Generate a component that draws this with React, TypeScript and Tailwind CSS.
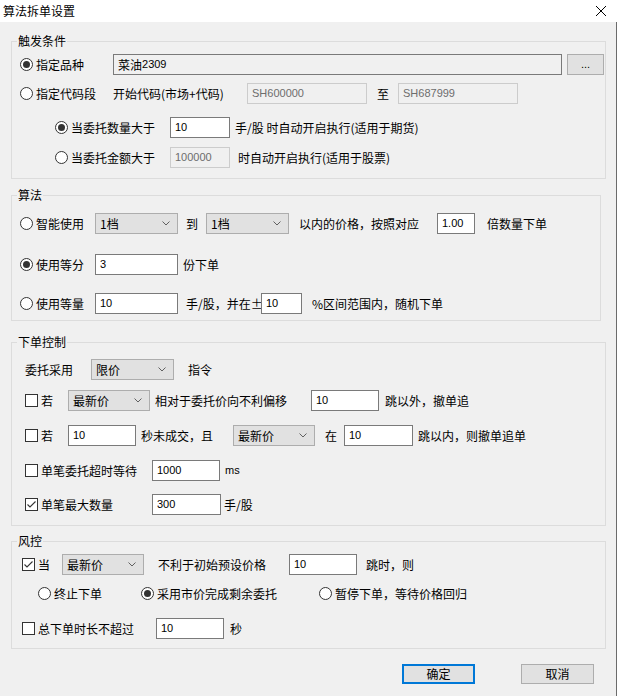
import type { ReactNode } from "react";

const cjk = "font-['Noto_Sans_CJK_SC','Liberation_Sans',sans-serif]";
const num = "font-['Liberation_Sans','Noto_Sans_CJK_SC',sans-serif]";

function Radio({ checked }: { checked?: boolean }) {
  return (
    <span className="w-[13px] h-[13px] shrink-0 rounded-full border border-[#333333] bg-white flex items-center justify-center">
      {checked && <span className="w-[7px] h-[7px] rounded-full bg-[#333333]" />}
    </span>
  );
}

function Check({ checked }: { checked?: boolean }) {
  return (
    <span className="w-[13px] h-[13px] shrink-0 border border-[#333333] bg-white flex items-center justify-center">
      {checked && (
        <svg width="11" height="11" viewBox="0 0 11 11">
          <polyline points="1.5,5.5 4,8 9.5,2.5" fill="none" stroke="#333333" strokeWidth="1.1" />
        </svg>
      )}
    </span>
  );
}

function Opt({ w, children, box }: { w: string; children: ReactNode; box: ReactNode }) {
  return (
    <div className={`${w} shrink-0 flex items-center gap-[3px] whitespace-nowrap`}>
      {box}
      <span>{children}</span>
    </div>
  );
}

function Input({ w, value, disabled, readOnly }: { w: string; value: string; disabled?: boolean; readOnly?: boolean }) {
  const look = disabled
    ? "border-[#cccccc] bg-[#f0f0f0] text-[#6d6d6d]"
    : readOnly
      ? "border-[#7a7a7a] bg-[#f0f0f0] text-black"
      : "border-[#7a7a7a] bg-white text-black";
  return (
    <div className={`${w} h-[21px] shrink-0 border ${look} flex items-center px-[4px] text-[11px] ${num}`}>
      {value}
    </div>
  );
}

function Select({ w, value }: { w: string; value: string }) {
  return (
    <div className={`${w} h-[21px] shrink-0 border border-[#adadad] bg-[#e1e1e1] flex items-center justify-between pl-[4px] pr-[7px]`}>
      <span>{value}</span>
      <svg width="8" height="5" viewBox="0 0 8 5">
        <polyline points="0.5,0.5 4,4 7.5,0.5" fill="none" stroke="#606060" strokeWidth="1" />
      </svg>
    </div>
  );
}

function Group({ title, w, children, mt, pb }: { title: string; w: string; children: ReactNode; mt: string; pb: string }) {
  return (
    <fieldset className={`ml-[11px] ${w} ${mt} ${pb} border border-[#dcdcdc]`}>
      <legend className="ml-[5px] px-[1px] leading-[16px]">{title}</legend>
      {children}
    </fieldset>
  );
}

function Row({ className, children }: { className: string; children: ReactNode }) {
  return <div className={`flex items-center h-[21px] whitespace-nowrap ${className}`}>{children}</div>;
}

export default function App() {
  return (
    <div className={`w-[617px] h-[696px] bg-[#f0f0f0] text-[12px] text-black ${cjk} flex flex-col`}>
      <div className="h-[22px] bg-white flex items-center justify-between pl-[3px] pr-[11px]">
        <span>算法拆单设置</span>
        <svg width="10" height="10" viewBox="0 0 10 10">
          <path d="M0 0 L10 10 M10 0 L0 10" stroke="#000" strokeWidth="1" />
        </svg>
      </div>

      <div className="flex-1 border-r border-[#6b6b6b]">
        <Group title="触发条件" w="w-[595px]" mt="mt-[11px]" pb="pb-[10px]">
          <Row className="mt-[5px] pl-[8px]">
            <Opt w="w-[93px]" box={<Radio checked />}>指定品种</Opt>
            <div className="w-[449px] h-[21px] shrink-0 border border-[#7a7a7a] bg-[#f0f0f0] flex items-center px-[4px]">
              菜油<span className={`text-[11px] ${num}`}>2309</span>
            </div>
            <div className={`ml-[5px] w-[37px] h-[21px] border border-[#adadad] bg-[#e1e1e1] flex items-center justify-center text-[11px] ${num}`}>
              ...
            </div>
          </Row>
          <Row className="mt-[8px] pl-[8px]">
            <Opt w="w-[93px]" box={<Radio />}>指定代码段</Opt>
            <span className="w-[134px] shrink-0">开始代码(市场+代码)</span>
            <Input w="w-[120px]" value="SH600000" disabled />
            <span className="w-[31px] shrink-0 pl-[10px]">至</span>
            <Input w="w-[120px]" value="SH687999" disabled />
          </Row>
          <Row className="mt-[13px] pl-[43px]">
            <Opt w="w-[115px]" box={<Radio checked />}>当委托数量大于</Opt>
            <Input w="w-[60px]" value="10" />
            <span className="ml-[5px]">手/股 时自动开启执行(适用于期货)</span>
          </Row>
          <Row className="mt-[9px] pl-[43px]">
            <Opt w="w-[115px]" box={<Radio />}>当委托金额大于</Opt>
            <Input w="w-[60px]" value="100000" disabled />
            <span className="ml-[8px]">时自动开启执行(适用于股票)</span>
          </Row>
        </Group>

        <Group title="算法" w="w-[590px]" mt="mt-[8px]" pb="pb-[6px]">
          <Row className="mt-[10px] pl-[8px]">
            <Opt w="w-[75px]" box={<Radio />}>智能使用</Opt>
            <Select w="w-[83px]" value="1档" />
            <span className="w-[28px] shrink-0 pl-[8px]">到</span>
            <Select w="w-[83px]" value="1档" />
            <span className="w-[148px] shrink-0 pl-[10px]">以内的价格，按照对应</span>
            <Input w="w-[38px]" value="1.00" />
            <span className="pl-[12px]">倍数量下单</span>
          </Row>
          <Row className="mt-[20px] pl-[8px]">
            <Opt w="w-[75px]" box={<Radio checked />}>使用等分</Opt>
            <Input w="w-[83px]" value="3" />
            <span className="ml-[5px]">份下单</span>
          </Row>
          <Row className="mt-[18px] pl-[8px]">
            <Opt w="w-[75px]" box={<Radio />}>使用等量</Opt>
            <Input w="w-[83px]" value="10" />
            <span className="w-[83px] shrink-0 pl-[8px] text-right pr-0">手/股，并在±</span>
            <Input w="w-[41px]" value="10" />
            <span className="pl-[10px]">%区间范围内，随机下单</span>
          </Row>
        </Group>

        <Group title="下单控制" w="w-[595px]" mt="mt-[13px]" pb="pb-[10px]">
          <Row className="mt-[9px] pl-[13px]">
            <span className="w-[66px] shrink-0">委托采用</span>
            <Select w="w-[83px]" value="限价" />
            <span className="pl-[14px]">指令</span>
          </Row>
          <Row className="mt-[10px] pl-[13px]">
            <Opt w="w-[43px]" box={<Check />}>若</Opt>
            <Select w="w-[82px]" value="最新价" />
            <span className="w-[161px] shrink-0 pl-[5px]">相对于委托价向不利偏移</span>
            <Input w="w-[68px]" value="10" />
            <span className="pl-[6px]">跳以外，撤单追</span>
          </Row>
          <Row className="mt-[14px] pl-[13px]">
            <Opt w="w-[43px]" box={<Check />}>若</Opt>
            <Input w="w-[68px]" value="10" />
            <span className="w-[97px] shrink-0 pl-[5px]">秒未成交，且</span>
            <Select w="w-[82px]" value="最新价" />
            <span className="w-[29px] shrink-0 pl-[10px]">在</span>
            <Input w="w-[69px]" value="10" />
            <span className="pl-[5px]">跳以内，则撤单追单</span>
          </Row>
          <Row className="mt-[14px] pl-[13px]">
            <Opt w="w-[127px]" box={<Check />}>单笔委托超时等待</Opt>
            <Input w="w-[68px]" value="1000" />
            <span className={`pl-[5px] text-[11px] ${num}`}>ms</span>
          </Row>
          <Row className="mt-[13px] pl-[13px]">
            <Opt w="w-[127px]" box={<Check checked />}>单笔最大数量</Opt>
            <Input w="w-[69px]" value="300" />
            <span className="pl-[3px]">手/股</span>
          </Row>
        </Group>

        <Group title="风控" w="w-[595px]" mt="mt-[7px]" pb="pb-[9px]">
          <Row className="mt-[5px] pl-[10px]">
            <Opt w="w-[40px]" box={<Check checked />}>当</Opt>
            <Select w="w-[82px]" value="最新价" />
            <span className="w-[145px] shrink-0 pl-[14px]">不利于初始预设价格</span>
            <Input w="w-[68px]" value="10" />
            <span className="pl-[9px]">跳时，则</span>
          </Row>
          <Row className="mt-[8px] pl-[26px]">
            <Opt w="w-[103px]" box={<Radio />}>终止下单</Opt>
            <Opt w="w-[178px]" box={<Radio checked />}>采用市价完成剩余委托</Opt>
            <Opt w="w-[200px]" box={<Radio />}>暂停下单，等待价格回归</Opt>
          </Row>
          <Row className="mt-[14px] pl-[10px]">
            <Opt w="w-[134px]" box={<Check />}>总下单时长不超过</Opt>
            <Input w="w-[68px]" value="10" />
            <span className="pl-[6px]">秒</span>
          </Row>
        </Group>

        <div className="mt-[15px] flex">
          <div className="ml-[402px] w-[73px] h-[20px] border-2 border-[#0078d7] bg-[#e1e1e1] flex items-center justify-center">
            确定
          </div>
          <div className="ml-[46px] w-[73px] h-[20px] border border-[#adadad] bg-[#e1e1e1] flex items-center justify-center">
            取消
          </div>
        </div>
      </div>
    </div>
  );
}
